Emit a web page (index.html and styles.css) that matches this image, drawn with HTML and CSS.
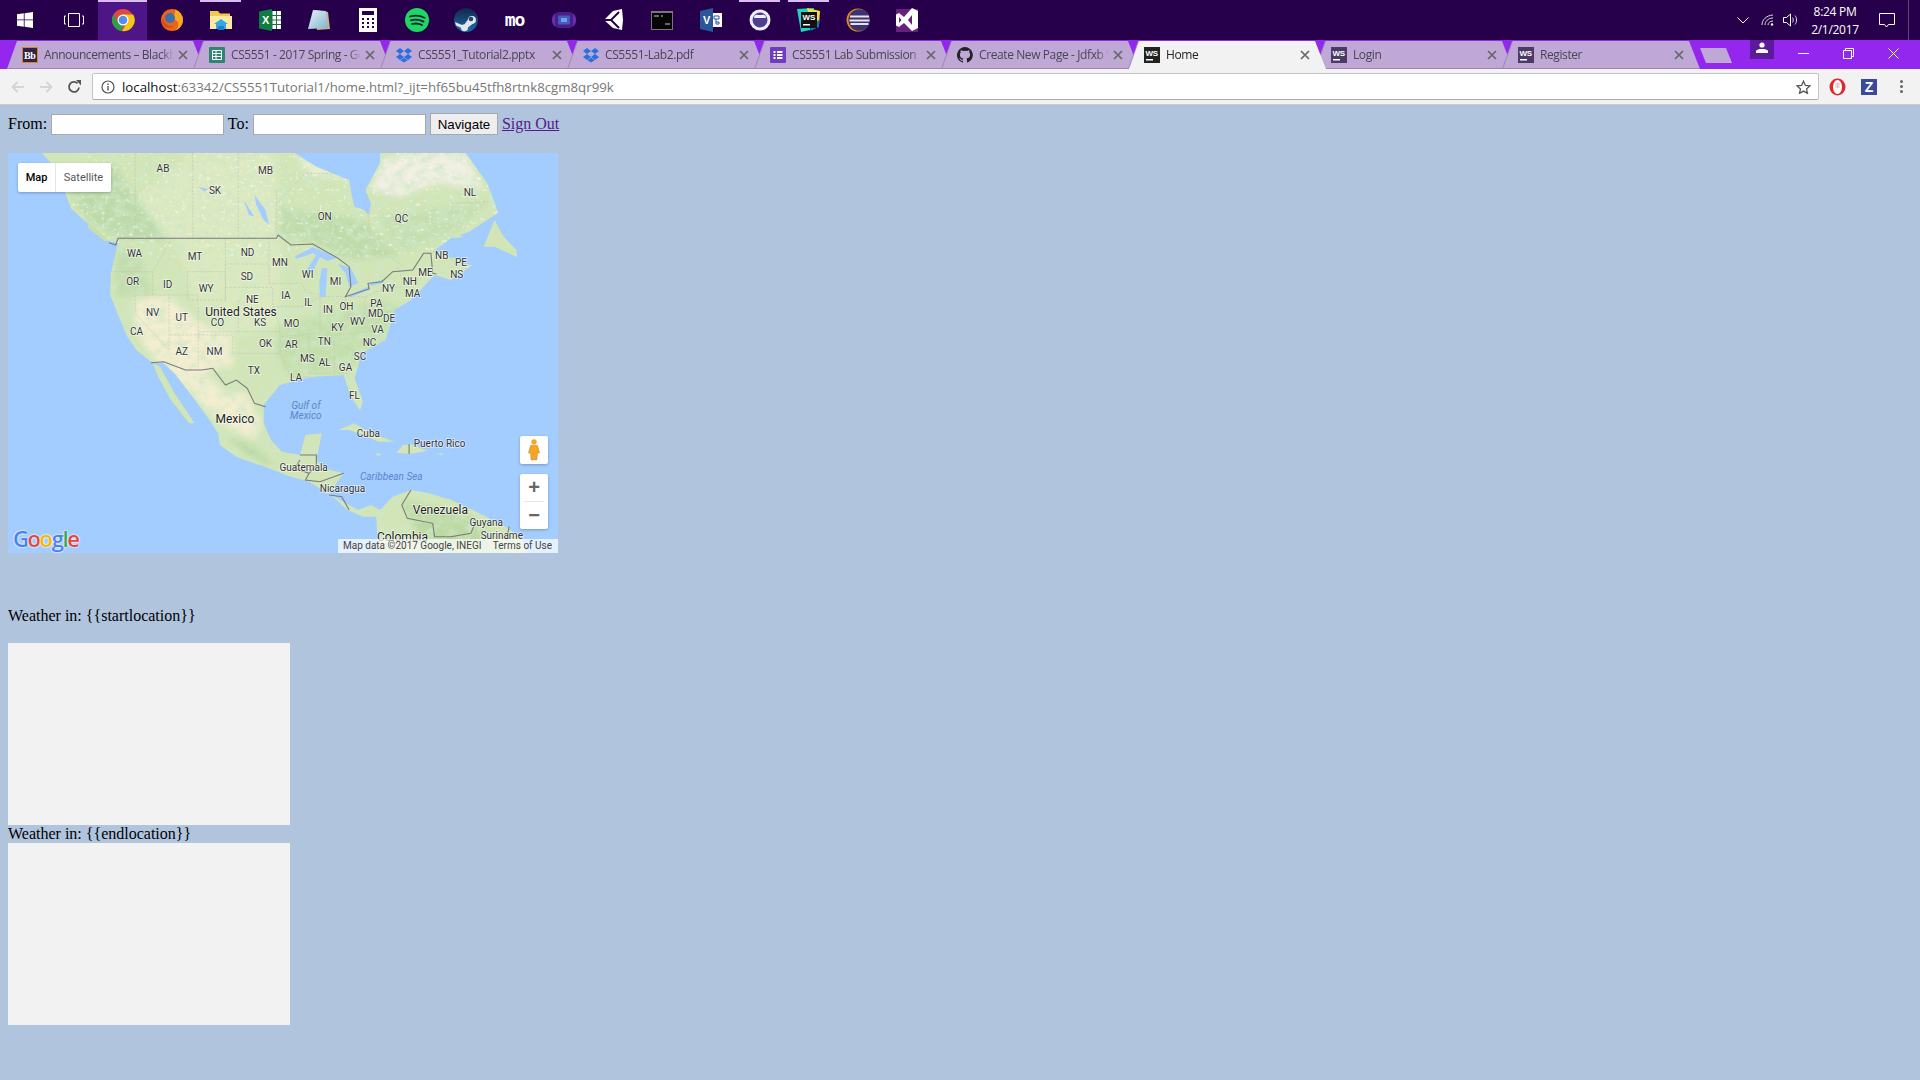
FILE: index.html
```html
<!DOCTYPE html>
<html lang="en">
<head>
<meta charset="utf-8">
<title>Home</title>
<link rel="stylesheet" href="styles.css">
</head>
<body>
<svg class="defs" width="0" height="0" aria-hidden="true">
  <symbol id="ws" viewBox="0 0 16 16"><rect class="ws-box" width="16" height="16" fill="currentColor"/><text x="1.500" y="9" font-family="Liberation Sans" font-weight="700" font-size="8" fill="#fff">WS</text><rect x="2" y="12" width="7" height="1.500" fill="#fff"/></symbol>
  <symbol id="drop" viewBox="0 0 16 16"><path fill="#2a6fe0" d="M4 1 8 4 4 7 0 4ZM12 1l4 3-4 3-4-3ZM4 7l4 3-4 3-4-3ZM12 7l4 3-4 3-4-3ZM8 10.800l3.600 2.400L8 15.600l-3.600-2.400Z"/></symbol>
  <symbol id="x" viewBox="0 0 10 10"><path d="M1 1l8 8M9 1 1 9" stroke="#666" stroke-width="1.700" fill="none"/></symbol>
</svg>

<header class="taskbar">
  <div class="tile"><svg width="16" height="16" viewBox="0 0 16 16"><path fill="#fff" d="M0 2.300 6.800 1.300V7.500H0ZM7.600 1.200 16 0V7.500H7.600ZM0 8.300H6.800V14.700L0 13.700ZM7.600 8.300H16V16L7.600 14.800Z"/></svg></div>
  <div class="tile"><svg width="20" height="14" viewBox="0 0 20 14"><path fill="none" stroke="#fff" stroke-width="1" d="M4.500.5h11v13h-11ZM2 3H.5v8H2M18 3h1.500v8H18"/></svg></div>
  <div class="tile tile-active"><svg width="24" height="24" viewBox="0 0 24 24"><circle cx="12" cy="12" r="11" fill="#dd4b3e"/><path fill="#f5c518" d="M12 6.500h10.200A11 11 0 0 1 11 23l5.500-9Z"/><path fill="#2f9e48" d="M2.500 6.500 8 15l4 2.500L11 23A11 11 0 0 1 2.500 6.500Z"/><circle cx="12" cy="12" r="5.500" fill="#fff"/><circle cx="12" cy="12" r="4.300" fill="#5a8cf0"/></svg></div>
  <div class="tile"><svg width="24" height="24" viewBox="0 0 24 24"><circle cx="12" cy="12" r="11" fill="#e8641b"/><path fill="#f7a823" d="M15 1.500A11 11 0 0 1 23 12c0 4-3 9-8 10.500 3-2 4-5 3-8-1-3-5-3-6-5 1-2 4-3 3-8Z"/><circle cx="10" cy="10" r="5" fill="#3c6fae"/><path fill="#d9481a" d="M3 10c1 6 6 9 11 8-4 4-11 1-12-4Z"/></svg></div>
  <div class="tile"><svg width="24" height="24" viewBox="0 0 24 24"><path fill="#f2c94c" d="M1 3h8l2 2.500h10V21H1Z"/><path fill="#fdeaa0" d="M1 8h22v13H1Z"/><path fill="#35a6e8" d="M7 21v-5h-2l7-5 7 5h-2v5Z"/><rect x="9" y="18" width="6" height="4" fill="#1f7fc4"/></svg></div>
  <div class="tile"><svg width="24" height="24" viewBox="0 0 24 24"><rect x="10" y="3" width="13" height="18" fill="#fff"/><path stroke="#1c7145" stroke-width="1" d="M14 3v18M18.500 3v18M10 7.500h13M10 12h13M10 16.500h13"/><path fill="#107c41" d="M1 3.500 14 1v22L1 20.500Z"/><text x="4" y="16" font-family="Liberation Sans" font-weight="700" font-size="11" fill="#fff">X</text></svg></div>
  <div class="tile"><svg width="24" height="24" viewBox="0 0 24 24"><defs><linearGradient id="pad" x1="0" x2="1" y1="0" y2="1"><stop offset="0" stop-color="#e8f3f8"/><stop offset="1" stop-color="#7fb4cf"/></linearGradient></defs><path fill="#c4b485" d="M8 2 21 4 23 21 10 22Z"/><path fill="url(#pad)" d="M6 2 19 3 21 20 1 21Z"/></svg></div>
  <div class="tile"><svg width="18" height="24" viewBox="0 0 18 24"><rect width="18" height="24" fill="#fff"/><rect x="3" y="3" width="12" height="4" fill="#26004a"/><path fill="#26004a" d="M3 10h2v2H3ZM8 10h2v2H8ZM13 10h2v2h-2ZM3 14h2v2H3ZM8 14h2v2H8ZM13 14h2v2h-2ZM3 18h2v2H3ZM8 18h2v2H8ZM13 18h2v2h-2Z"/></svg></div>
  <div class="tile"><svg width="24" height="24" viewBox="0 0 24 24"><circle cx="12" cy="12" r="12" fill="#1ed760"/><path d="M5 8.500c5-1.500 10-1 14.500 1.300M6 12.300c4.500-1.200 8.500-.8 12.500 1.300M7 16c3.500-.9 7-.6 10 1" stroke="#15243a" stroke-width="1.800" fill="none" stroke-linecap="round"/></svg></div>
  <div class="tile"><svg width="24" height="24" viewBox="0 0 24 24"><defs><linearGradient id="steam" x1="0" x2="0" y1="0" y2="1"><stop offset="0" stop-color="#14234a"/><stop offset="1" stop-color="#1a70a8"/></linearGradient></defs><circle cx="12" cy="12" r="12" fill="url(#steam)"/><path fill="#e6e6ee" d="M1 14 8 17a3.500 3.500 0 0 1 2.500-.8l3.500-4.700a4 4 0 1 1 4.500 4.500l-4.500 3.500a3.500 3.500 0 0 1-7 .3L2 17.500Z"/><circle cx="17" cy="11" r="2.300" fill="#27456f"/></svg></div>
  <div class="tile"><span class="mo-mark">mo</span></div>
  <div class="tile"><svg width="24" height="16" viewBox="0 0 24 16"><rect y="1" width="24" height="14" rx="6" fill="#6a2fb0"/><rect x="3" width="18" height="16" rx="4" fill="#4a1d88"/><rect x="6" y="3.500" width="12" height="9" rx="1" fill="#3f5fc0"/><rect x="9" y="6" width="6" height="4" fill="#7f9be8"/></svg></div>
  <div class="tile"><svg width="22" height="24" viewBox="0 0 22 24"><path fill="#fff" d="M2 12 11 3 20 1 21 12 20 22 11 20Z"/><path stroke="#26004a" stroke-width="2" fill="none" d="M2 12H9L17 4M9 12 17 20"/></svg></div>
  <div class="tile"><svg width="22" height="19" viewBox="0 0 22 19"><rect width="22" height="19" fill="#777"/><rect x="1" y="2" width="20" height="16" fill="#050505"/><path stroke="#ccc" stroke-width="1" d="M3 5h5M10 5h2M14 13h5"/></svg></div>
  <div class="tile"><svg width="22" height="24" viewBox="0 0 22 24"><rect x="10" y="5" width="12" height="14" fill="#fff"/><path stroke="#2b579a" stroke-width="1" fill="none" d="M14 8h5v3h-5ZM16 11v3h3v2h-3v-2"/><path fill="#2b579a" d="M0 3 13 0v24L0 21Z"/><text x="3" y="16" font-family="Liberation Sans" font-weight="700" font-size="11" fill="#fff">V</text></svg></div>
  <div class="tile"><svg width="22" height="22" viewBox="0 0 22 22"><circle cx="11" cy="11" r="9" fill="#4f3f8f" stroke="#f1edf8" stroke-width="3"/><path fill="#f1edf8" d="M5 9C5 5 8 5.500 9 6h4c1-.5 4-1 4 3Z"/></svg></div>
  <div class="tile"><svg width="24" height="24" viewBox="0 0 24 24"><path fill="#22d3c0" d="M0 1 17 0l-4 22-9 2Z"/><path fill="#f4e23c" d="M10 0l13 3-1 14-8-1Z"/><path fill="#0a7cc4" d="M22 12v7l-9 4 3-8Z"/><rect x="4" y="4" width="16" height="16" fill="#111"/><text x="5.500" y="12" font-family="Liberation Sans" font-weight="700" font-size="8" fill="#fff">WS</text><rect x="6" y="16" width="7" height="1.500" fill="#fff"/></svg></div>
  <div class="tile"><svg width="24" height="24" viewBox="0 0 24 24"><circle cx="12" cy="12" r="11.500" fill="#e08a1e"/><circle cx="13.200" cy="12" r="10.800" fill="#3d3270"/><path stroke="#e6e2f4" stroke-width="2" d="M4 8.500h19M3.500 12.500h20M4.500 16h18"/></svg></div>
  <div class="tile"><svg width="22" height="24" viewBox="0 0 22 24"><rect y="1" width="22" height="23" fill="#68217a"/><path fill="#fff" d="M16 0 22 3v17l-6 3-8-8-5 4-3-1.500v-11L3 5l5 4Zm0 7-4 5 4 5ZM3 9v6l2.500-3Z"/></svg></div>
  <div class="tray">
    <svg class="tray-chevron" width="12" height="7" viewBox="0 0 12 7"><path d="M.5.5 6 6l5.500-5.500" fill="none" stroke="#fff"/></svg>
    <svg class="tray-wifi" width="13" height="12" viewBox="0 0 13 12"><path d="M1 11C1 6 5 1.500 12 1M4 11c0-3.500 3-7 8-7M7 11c0-2 2-4 5-4" fill="none" stroke="#ddd" stroke-width="1"/><circle cx="11" cy="10.500" r="1.200" fill="#fff"/></svg>
    <svg class="tray-sound" width="16" height="14" viewBox="0 0 16 14"><path d="M.5 4.500h3l4-3.500v12l-4-3.500h-3Z" fill="none" stroke="#fff"/><path d="M9.500 4.500c1 1.500 1 3.500 0 5M12 2.500c2 2.500 2 6.500 0 9" fill="none" stroke="#ddd"/></svg>
    <div class="clock"><span>8:24 PM</span><span>2/1/2017</span></div>
    <svg class="tray-note" width="16" height="15" viewBox="0 0 16 15"><path d="M.5.500h15v11H9.500L7.500 14l-2-2.500h-5Z" fill="none" stroke="#fff"/></svg>
    <span class="tray-edge"></span>
  </div>
</header>

<nav class="tabstrip">
  <div class="tab"><div class="tab-body"><svg class="favicon" viewBox="0 0 16 16"><rect width="16" height="16" fill="#d9822b"/><rect x="1" y="1" width="14" height="14" fill="#2e2548"/><text x="2" y="12" font-family="Liberation Serif" font-weight="700" font-size="10" fill="#fff">Bb</text></svg><span class="tab-title">Announcements – Blackboard</span><svg class="tab-x"><use href="#x"/></svg></div></div>
  <div class="tab"><div class="tab-body"><svg class="favicon" viewBox="0 0 16 16"><rect width="16" height="16" rx="1" fill="#2e8571"/><path fill="none" stroke="#fff" stroke-width="1" d="M3.500 3.500h9v9h-9ZM3.500 6.500h9M3.500 9.500h9M7 3.500v9"/></svg><span class="tab-title">CS5551 - 2017 Spring - Google Sheets</span><svg class="tab-x"><use href="#x"/></svg></div></div>
  <div class="tab"><div class="tab-body"><svg class="favicon"><use href="#drop"/></svg><span class="tab-title">CS5551_Tutorial2.pptx</span><svg class="tab-x"><use href="#x"/></svg></div></div>
  <div class="tab"><div class="tab-body"><svg class="favicon"><use href="#drop"/></svg><span class="tab-title">CS5551-Lab2.pdf</span><svg class="tab-x"><use href="#x"/></svg></div></div>
  <div class="tab"><div class="tab-body"><svg class="favicon" viewBox="0 0 16 16"><rect width="16" height="16" rx="1" fill="#6f3cc0"/><path fill="#fff" d="M3.500 4h2v2h-2ZM7 4h5.500v2H7ZM3.500 7h2v2h-2ZM7 7h5.500v2H7ZM3.500 10h2v2h-2ZM7 10h5.500v2H7Z"/></svg><span class="tab-title">CS5551 Lab Submission</span><svg class="tab-x"><use href="#x"/></svg></div></div>
  <div class="tab"><div class="tab-body"><svg class="favicon" viewBox="0 0 16 16"><path fill="#222" d="M8 0a8 8 0 0 0-2.500 15.600c.4.100.5-.2.500-.4v-1.400c-2.200.5-2.700-1-2.700-1-.4-.9-.9-1.200-.9-1.200-.7-.5.100-.5.100-.5.800.1 1.200.8 1.200.8.700 1.200 1.900.9 2.300.7.100-.5.300-.9.500-1.100-1.800-.2-3.600-.9-3.600-4 0-.9.300-1.600.8-2.100-.1-.2-.4-1 .1-2.100 0 0 .7-.2 2.200.8a7.600 7.600 0 0 1 4 0c1.500-1 2.200-.8 2.200-.8.400 1.100.2 1.900.1 2.100.5.600.8 1.300.8 2.100 0 3.100-1.900 3.700-3.700 3.900.3.300.6.800.6 1.500v2.200c0 .2.100.5.600.4A8 8 0 0 0 8 0Z"/></svg><span class="tab-title">Create New Page - Jdfxb Wiki</span><svg class="tab-x"><use href="#x"/></svg></div></div>
  <div class="tab tab-active"><div class="tab-body"><svg class="favicon ws-dark"><use href="#ws"/></svg><span class="tab-title">Home</span><svg class="tab-x"><use href="#x"/></svg></div></div>
  <div class="tab"><div class="tab-body"><svg class="favicon ws-muted"><use href="#ws"/></svg><span class="tab-title">Login</span><svg class="tab-x"><use href="#x"/></svg></div></div>
  <div class="tab"><div class="tab-body"><svg class="favicon ws-muted"><use href="#ws"/></svg><span class="tab-title">Register</span><svg class="tab-x"><use href="#x"/></svg></div></div>
  <div class="newtab"></div>
  <div class="profile"><svg width="12" height="11" viewBox="0 0 12 11"><circle cx="6" cy="3" r="2.600" fill="#fff"/><path fill="#fff" d="M0 11V8.500L3.500 7h5L12 8.500V11Z"/></svg></div>
  <div class="winctl"><svg width="11" height="11" viewBox="0 0 11 11"><path d="M0 5.500h11" stroke="#fff"/></svg></div>
  <div class="winctl"><svg width="11" height="11" viewBox="0 0 11 11"><path d="M.5 2.500h8v8h-8ZM2.500 2.500v-2h8v8h-2" fill="none" stroke="#fff"/></svg></div>
  <div class="winctl"><svg width="11" height="11" viewBox="0 0 11 11"><path d="M.5.500l10 10M10.500.500l-10 10" stroke="#fff"/></svg></div>
</nav>

<div class="toolbar">
  <div class="tool"><svg width="14" height="12" viewBox="0 0 14 12"><path d="M13 6H1.500M6.500 1l-5 5 5 5" fill="none" stroke="#d4d4d4" stroke-width="1.800"/></svg></div>
  <div class="tool"><svg width="14" height="12" viewBox="0 0 14 12"><path d="M1 6h11.500M7.500 1l5 5-5 5" fill="none" stroke="#d4d4d4" stroke-width="1.800"/></svg></div>
  <div class="tool"><svg width="14" height="14" viewBox="0 0 14 14"><path d="M12 7.500A5 5 0 1 1 10.500 3.300" fill="none" stroke="#555" stroke-width="1.800"/><path fill="#555" d="M9 0h5v5.500Z"/></svg></div>
  <div class="omnibox">
    <svg class="info" width="14" height="14" viewBox="0 0 14 14"><circle cx="7" cy="7" r="6" fill="none" stroke="#555" stroke-width="1.200"/><path d="M6.300 6h1.400v4.500H6.300ZM6.300 3.500h1.400v1.400H6.300Z" fill="#555"/></svg>
    <span class="url"><span class="url-host">localhost</span>:63342/CS5551Tutorial1/home.html?_ijt=hf65bu45tfh8rtnk8cgm8qr99k</span>
    <svg class="star" width="15" height="14" viewBox="0 0 15 14"><path d="M7.500 1.200 9.400 5.400l4.500.5-3.400 3 1 4.500-4-2.300-4 2.300 1-4.500-3.400-3 4.500-.5Z" fill="none" stroke="#555" stroke-width="1.300"/></svg>
  </div>
  <div class="ext ext-opera"><svg width="17" height="18" viewBox="0 0 17 18"><ellipse cx="8.500" cy="9" rx="8" ry="8.500" fill="#e0272b"/><ellipse cx="8.500" cy="9" rx="4.500" ry="7" fill="#fff"/><path stroke="#e0a8a8" stroke-width=".8" d="M7 5v5M8.500 4.500V10M10 5v5"/></svg></div>
  <div class="ext"><span class="zmark">Z</span></div>
  <div class="ext ext-menu"><span></span><span></span><span></span></div>
</div>

<main class="page">
  <form class="route">
    <label class="route-label">From:</label>
    <input class="route-input" type="text">
    <label class="route-label">To:</label>
    <input class="route-input" type="text">
    <button class="route-btn" type="button">Navigate</button>
    <a class="signout" href="#">Sign Out</a>
  </form>

  <div class="map">
    <svg class="map-canvas" width="550" height="400" viewBox="0 0 550 400">
      <defs>
        <filter id="soft" x="-5%" y="-5%" width="110%" height="110%"><feGaussianBlur stdDeviation="9"/></filter>
        <filter id="mottle" x="0" y="0" width="100%" height="100%"><feTurbulence type="fractalNoise" baseFrequency=".035 .04" numOctaves="3" seed="7"/><feColorMatrix values="0 0 0 0 .62  0 0 0 0 .80  0 0 0 0 .56  1.800 0 0 0 -.72"/></filter>
        <filter id="speck" x="0" y="0" width="100%" height="100%"><feTurbulence type="fractalNoise" baseFrequency=".09" numOctaves="2" seed="3"/><feColorMatrix values="0 0 0 0 .97  0 0 0 0 .97  0 0 0 0 .90  0 3 0 0 -1.850"/></filter>
        <clipPath id="landclip"><path id="landpath" d="M115 39 150 80 170 130 195 205 240 250 290 300 325 310 318 340 305 400 303 465 325 525 350 590 375 630 415 665 450 670 480 700 530 770 570 830 600 880 605 915 650 950 740 985 800 1010 850 1025 910 1065 955 1110 1000 1130 1035 1130 1040 1240 1450 1240 1430 1190 1390 1160 1300 1110 1240 1080 1180 1060 1130 1050 1080 1070 1045 1110 1020 1095 985 1110 950 1090 905 1060 945 1000 890 985 870 960 885 880 840 885 825 945 775 935 745 900 725 850 725 795 770 735 820 720 860 710 945 705 965 770 990 810 998 785 975 715 995 640 1060 600 1085 510 1130 480 1195 405 1240 420 1300 375 1250 370 1225 335 1190 335 1240 295 1290 275 1370 218 1340 130 1280 39 1045 39 1045 70 1005 150 1020 190 1015 225 970 180 960 120 870 80 810 39Z"/></clipPath>
      </defs>
      <rect width="550" height="400" fill="#a3ccff"/>
      <g transform="translate(-8 -13) scale(.36364 .33333)">
        <use href="#landpath" fill="#d2e5b6"/>
        <g clip-path="url(#landclip)">
          <g filter="url(#soft)">
            <path fill="#dde9c1" d="M530 39 760 39 760 290 470 295 350 200Z"/>
            <path fill="#bddaaa" d="M190 150 310 70 460 300 320 295 240 240Z"/>
            <path fill="#bfdbaa" d="M770 200 1000 240 1100 350 950 360 870 310 770 290Z"/>
            <path fill="#c6dfb1" d="M1030 230 1350 180 1240 290 1100 340Z"/>
            <path fill="#f0efe2" d="M1050 60 1120 39 1280 39 1330 150 1200 130 1100 170 1020 150Z"/>
            <path fill="#eef0d8" d="M810 39 960 120 850 100Z"/>
            <path fill="#dce9bf" d="M480 300 770 300 770 560 640 590 540 500Z"/>
            <path fill="#f3eed0" d="M370 470 470 470 540 540 640 590 640 680 560 690 620 760 680 760 720 850 700 900 620 860 520 760 450 680 410 640 370 560Z"/>
            <path fill="#c4dfac" d="M760 560 1060 480 1100 500 1060 600 990 640 960 700 800 710 760 660Z"/>
            <path fill="#c2ddad" d="M310 320 380 330 420 470 320 470Z"/>
            <path fill="#bcd9a4" d="M1100 1080 1300 1130 1400 1240 1180 1240Z"/>
            <path fill="#bcd9a8" d="M610 880 700 960 760 980 700 920Z"/>
          </g>
          <rect x="0" y="0" width="1568" height="1290" filter="url(#mottle)"/>
          <path filter="url(#speck)" d="M200 39H1370V350H1000L760 280H400Z"/>
        </g>
        <path fill="#d2e5b6" d="M420 670 440 680 480 760 535 850 520 850 470 780 435 710Z"/>
        <path fill="#c6deb0" d="M245 250 300 300 290 305 240 262Z"/>
        <path fill="#d2e5b6" d="M1330 320 1360 240 1385 290 1420 330 1422 352 1400 340 1360 320Z"/>
        <path fill="#d2e5b6" d="M930 870 975 850 1020 880 1085 905 1040 905 1000 885 960 870Z"/>
        <path fill="#d2e5b6" d="M1108 915 1130 912 1175 932 1130 942 1090 938Z"/>
        <path fill="#d2e5b6" d="M1030 940 1052 942 1040 948ZM1200 940 1220 940 1215 945ZM1235 938l6 2-4 2ZM1260 942l6 2-5 1Z"/>
        <path fill="#d2e5b6" d="M1240 350 1285 370 1250 372ZM1250 295 1275 290 1250 280Z"/>
        <path fill="#a3ccff" d="M810 350 860 322 930 352 900 362 860 340 815 356ZM885 385 900 385 895 470 880 470 878 430ZM930 372 965 385 985 430 960 440 950 400ZM955 468 1012 440 1020 446 965 472ZM1015 430 1050 420 1055 428 1020 438Z"/>
        <path fill="#a3ccff" d="M700 165 730 210 740 255 725 240 705 195ZM670 180 700 230 685 225ZM545 140l30 8-14 6ZM970 180l30 30-25-10Z"/>
        <path fill="#a3ccff" d="M840 395 870 345 880 350 860 395Z"/>
        <g fill="none" stroke="#c0c0b4" stroke-width="1.500" stroke-dasharray="7 4">
          <path d="M530 39V295M655 39V295M760 150V285M372 39V290M760 190 840 100 930 100"/>
          <path d="M1005 150 1020 310 1110 380M1240 190 1345 185"/>
          <path d="M620 295V480M740 295V430H830L840 455 880 465V470M620 372H740M620 442H750V500L770 560V640H640V585H465M515 395H620V480H515ZM372 465H515M372 465V520L465 630V465M515 465H545V680M420 465V395L470 300M305 395 420 395M545 575H770M655 480V575M750 500H835L880 470V580M880 580 770 590M880 470H950L960 530 890 590 1050 570M950 470 1005 470 1060 445 1110 440M1005 470 1000 530 1090 510M850 590V700H960M920 590V700M770 640 800 710H850M950 620 1000 660M1095 380 1120 470"/>
        </g>
        <g fill="none" stroke="#7a7a7a" stroke-width="3">
          <path d="M300 308 318 315 325 295H760L765 285 800 315 860 312 930 355 960 380 965 440 950 470 1015 447 1012 430 1050 425 1080 395 1135 390 1165 340 1185 340 1190 400 1200 402"/>
          <path d="M415 668 450 665 510 690 555 690 585 685 620 735 650 720 680 745 700 790 730 800"/>
          <path d="M825 945H870V975L850 1000 810 985 825 960M850 1000 840 1020 880 1025 945 1000M905 1065 940 1070 960 1110M1130 1050 1105 1095 1120 1135 1190 1150 1195 1190 1240 1190 1295 1180 1310 1140M1400 1160 1395 1190M1125 912V942"/>
        </g>
      </g>
      <g class="lbl">
        <text x="155" y="18.500">AB</text><text x="257.500" y="21.200">MB</text><text x="207" y="40.500">SK</text><text x="316.700" y="66.500">ON</text><text x="393.500" y="68.500">QC</text><text x="462" y="43.200">NL</text>
        <text x="126.500" y="103.500">WA</text><text x="187" y="106.500">MT</text><text x="239.600" y="102.500">ND</text><text x="272" y="112.500">MN</text><text x="299.600" y="124.500">WI</text><text x="327.600" y="131.500">MI</text>
        <text x="433.800" y="106.200">NB</text><text x="453" y="112.500">PE</text><text x="448.700" y="124.500">NS</text><text x="417.500" y="122.500">ME</text><text x="401.800" y="131.500">NH</text><text x="380.400" y="138.500">NY</text><text x="404.700" y="143.500">MA</text>
        <text x="124.700" y="131.500">OR</text><text x="159.600" y="134.500">ID</text><text x="198.200" y="138.500">WY</text><text x="238.900" y="126.500">SD</text><text x="277.800" y="145.500">IA</text><text x="244.400" y="149.500">NE</text><text x="300.400" y="153.200">IL</text><text x="338.500" y="156.500">OH</text><text x="320" y="159.500">IN</text><text x="368.400" y="154.200">PA</text><text x="367.600" y="163.500">MD</text><text x="381" y="168.500">DE</text>
        <text x="144.700" y="162.500">NV</text><text x="173.800" y="167.500">UT</text><text x="209.500" y="172.500">CO</text><text x="252" y="172.500">KS</text><text x="283.600" y="173.500">MO</text><text x="329.500" y="177.500">KY</text><text x="349.500" y="172.200">WV</text><text x="369.500" y="179.500">VA</text><text x="128.400" y="181.500">CA</text>
        <text x="257.500" y="193.500">OK</text><text x="283.300" y="194.500">AR</text><text x="316.400" y="191.500">TN</text><text x="361.500" y="192.500">NC</text><text x="173.800" y="201.500">AZ</text><text x="206.500" y="201.500">NM</text><text x="299.300" y="208.500">MS</text><text x="316.700" y="212.500">AL</text><text x="352" y="206.500">SC</text><text x="337.500" y="217.500">GA</text><text x="245.800" y="220.500">TX</text><text x="288" y="227.500">LA</text><text x="346.500" y="245.500">FL</text>
        <text x="360.400" y="283.500">Cuba</text><text x="431.600" y="293.500">Puerto Rico</text><text x="295.600" y="317.500">Guatemala</text><text x="334.500" y="338.500">Nicaragua</text><text x="478.200" y="372.500">Guyana</text><text x="493.800" y="386">Suriname</text>
      </g>
      <g class="lbl lbl-big">
        <text x="233" y="163">United States</text><text x="226.900" y="270">Mexico</text><text x="432.400" y="361">Venezuela</text><text x="394.500" y="388">Colombia</text>
      </g>
      <g class="lbl lbl-sea">
        <text x="298" y="255.500">Gulf of</text><text x="297.800" y="265.500">Mexico</text><text x="383.300" y="326.500">Caribbean Sea</text>
      </g>
    </svg>
    <div class="maptype"><span class="maptype-on">Map</span><span class="maptype-off">Satellite</span></div>
    <div class="pegman"><svg width="12" height="22" viewBox="0 0 12 22"><circle cx="6" cy="3" r="2.700" fill="#f5a623"/><path fill="#f5a623" stroke="#c97f10" stroke-width=".5" d="M2.500 6.500h7L11.500 14H9.500L8.800 21H6.500V15H5.500V21H3.200L2.500 14H.5Z"/></svg></div>
    <div class="zoomctl"><span class="zoombtn">+</span><span class="zoomrule"></span><span class="zoombtn">−</span></div>
    <div class="glogo"><span class="g-b">G</span><span class="g-r">o</span><span class="g-y">o</span><span class="g-b">g</span><span class="g-g">l</span><span class="g-r">e</span></div>
    <div class="mapcredit"><span>Map data ©2017 Google, INEGI</span><span>Terms of Use</span></div>
  </div>

  <p class="weather-first">Weather in: {{startlocation}}</p>
  <div class="weather-box"></div>
  <div class="weather-line">Weather in: {{endlocation}}</div>
  <div class="weather-box"></div>
</main>
</body>
</html>
```

FILE: styles.css
```css
html, body { margin: 0; height: 100%; }
body {
  height: 1080px;
  overflow: hidden;
  background: #b0c4de;
  color: #000;
  font-family: "Liberation Serif", "Times New Roman", serif;
  font-size: 16px;
}
.defs { position: absolute; }

/* Windows taskbar */
.taskbar {
  display: flex;
  height: 40px;
  background: #26004a;
}
.tile {
  flex: 0 0 49px;
  display: flex;
  align-items: center;
  justify-content: center;
  box-sizing: border-box;
}
.tile-active { background: #4e1587; box-shadow: inset 0 2px 0 #d9bdf2; }
.tile:nth-child(5) { box-shadow: inset 4px 0 0 #26004a, inset -4px 0 0 #26004a, inset 0 2px 0 #d9bdf2; }
.tile:nth-child(16), .tile:nth-child(17) { box-shadow: inset 4px 0 0 #26004a, inset -4px 0 0 #26004a, inset 0 2px 0 #d9bdf2; }
.mo-mark {
  color: #fff;
  font: 700 18px/1 "DejaVu Sans Mono", monospace;
  letter-spacing: -1px;
}
.tray { margin-left: auto; display: flex; align-items: center; width: 189px; }
.tray-chevron { margin-left: 6px; }
.tray-wifi { margin-left: 12px; }
.tray-sound { margin-left: 9px; }
.clock {
  display: flex;
  flex-direction: column;
  align-items: center;
  width: 66px;
  margin-left: 3px;
  gap: 3px;
  color: #fff;
  font: 12px/15px "Open Sans", sans-serif;
  letter-spacing: -.3px;
}
.tray-note { margin-left: 11px; }
.tray-edge { width: 1px; height: 40px; margin-left: 13px; background: #5d4a76; }

/* Chrome tab strip */
.tabstrip {
  display: flex;
  height: 29px;
  background: #9327ee;
}
.tab {
  flex: 0 0 197px;
  width: 197px;
  min-width: 0;
  margin-right: -10px;
  height: 29px;
  filter: drop-shadow(-1px 0 0 #9d86b8);
}
.tab:first-child { margin-left: 7px; filter: none; }
.tab-body {
  display: flex;
  align-items: center;
  box-sizing: border-box;
  width: 197px;
  height: 28px;
  margin-top: 1px;
  padding: 0 16px 0 15px;
  background: #c0a8d6;
  border-bottom: 1px solid #9a83b6;
  clip-path: polygon(10px 0, 186px 0, 197px 100%, 0 100%);
  color: #4a4458;
  font: 12px/16px "Open Sans", sans-serif;
  letter-spacing: -.4px;
}
.tab-active { position: relative; z-index: 1; }
.tab-active .tab-body { background: #f2f2f2; color: #222; border-bottom-color: #f2f2f2; }
.favicon { flex: 0 0 16px; width: 16px; height: 16px; margin-right: 6px; }
.ws-dark { color: #222; }
.ws-muted { color: #4b3a63; }
.tab-title {
  flex: 1;
  min-width: 0;
  overflow: hidden;
  white-space: nowrap;
  -webkit-mask-image: linear-gradient(to right, #000 calc(100% - 12px), transparent 100%);
  mask-image: linear-gradient(to right, #000 calc(100% - 12px), transparent 100%);
}
.tab-x { flex: 0 0 10px; width: 10px; height: 10px; margin-left: 4px; }
.newtab {
  flex: 0 0 32px;
  height: 15px;
  margin: 8px 0 0 10px;
  background: #c0a8d6;
  clip-path: polygon(0 0, 26px 0, 32px 100%, 6px 100%);
}
.profile {
  flex: 0 0 24px;
  height: 19px;
  margin-left: 18px;
  display: flex;
  justify-content: center;
  padding-top: 2px;
  box-sizing: border-box;
  background: #5d1a9b;
}
.profile + .winctl { margin-left: 7px; }
.winctl {
  flex: 0 0 45px;
  height: 26px;
  display: flex;
  align-items: center;
  justify-content: center;
}

/* Toolbar */
.toolbar {
  display: flex;
  align-items: center;
  box-sizing: border-box;
  height: 36px;
  padding: 0 3px 0 4px;
  background: #f2f2f2;
  border-bottom: 1px solid #c8ccd2;
}
.tool { flex: 0 0 28px; display: flex; justify-content: center; }
.omnibox {
  flex: 1;
  display: flex;
  align-items: center;
  box-sizing: border-box;
  height: 27px;
  margin-left: 4px;
  padding: 0 7px 0 8px;
  background: #fff;
  border: 1px solid #c4c4c4;
  border-bottom-color: #aaa;
  border-radius: 2px;
}
.info { flex: none; margin-right: 7px; }
.url {
  flex: 1;
  color: #777;
  font: 13.25px/16px "Open Sans", sans-serif;
  white-space: nowrap;
}
.url-host { color: #111; }
.star { flex: none; }
.ext { flex: 0 0 32px; display: flex; justify-content: center; align-items: center; }
.ext-opera { margin-left: 2px; }
.zmark {
  width: 16px;
  height: 16px;
  background: #3b4a96;
  color: #fff;
  text-align: center;
  font: 700 14px/16px "Liberation Sans", sans-serif;
}
.ext-menu { flex-direction: column; gap: 2px; }
.ext-menu span { width: 3px; height: 3px; border-radius: 50%; background: #666; }

/* Page */
.page { padding: 8px; }
.route { display: block; height: 40px; }
.route-input {
  box-sizing: border-box;
  width: 173px;
  height: 21px;
  padding: 1px 2px;
  background: #fff;
  border: 1px solid #a9a9a9;
  vertical-align: baseline;
}
.route-btn {
  box-sizing: border-box;
  width: 68px;
  height: 22px;
  padding: 0;
  background: #eee;
  border: 1px solid #a9a9a9;
  color: #000;
  font: 13.333px "Liberation Sans", Arial, sans-serif;
}
.signout { color: #551a8b; }

.map { position: relative; width: 550px; height: 400px; }
.map-canvas { display: block; }
.lbl {
  font: 10px "Roboto", sans-serif;
  fill: #333;
  text-anchor: middle;
  paint-order: stroke;
  stroke: rgba(255, 255, 255, .65);
  stroke-width: 1.500px;
}
.lbl-big { font-size: 12px; fill: #222; }
.lbl-sea { font-style: italic; fill: #5a86cc; stroke: none; }
.maptype {
  position: absolute;
  top: 10px;
  left: 10px;
  display: flex;
  height: 29px;
  background: #fff;
  border-radius: 2px;
  box-shadow: 0 1px 3px rgba(0, 0, 0, .25);
  font: 11px/29px "Roboto", sans-serif;
}
.maptype-on { width: 37px; text-align: center; color: #000; font-weight: 500; border-right: 1px solid #e6e6e6; }
.maptype-off { width: 55px; text-align: center; color: #565656; }
.pegman {
  position: absolute;
  left: 512px;
  top: 283px;
  width: 28px;
  height: 28px;
  display: flex;
  align-items: center;
  justify-content: center;
  background: #fff;
  border-radius: 2px;
  box-shadow: 0 1px 3px rgba(0, 0, 0, .25);
}
.zoomctl {
  position: absolute;
  left: 512px;
  top: 321px;
  width: 28px;
  height: 55px;
  display: flex;
  flex-direction: column;
  align-items: center;
  background: #fff;
  border-radius: 2px;
  box-shadow: 0 1px 3px rgba(0, 0, 0, .25);
}
.zoombtn {
  flex: 1;
  color: #666;
  font: 700 20px/27px "Liberation Sans", sans-serif;
}
.zoomrule { width: 20px; height: 1px; background: #e6e6e6; }
.glogo {
  position: absolute;
  left: 5px;
  top: 372px;
  font: 600 22px/26px "Open Sans", sans-serif;
  letter-spacing: -1.400px;
  text-shadow: 0 0 2px #fff, 0 0 2px #fff;
}
.g-b { color: #4a82ee; }
.g-r { color: #e8453c; }
.g-y { color: #f5b800; }
.g-g { color: #37a853; }
.mapcredit {
  position: absolute;
  right: 0;
  bottom: 0;
  display: flex;
  gap: 10px;
  box-sizing: border-box;
  width: 220px;
  height: 14px;
  padding: 0 6px 0 5px;
  justify-content: space-between;
  background: rgba(255, 255, 255, .7);
  color: #444;
  font: 10px/14px "Roboto", sans-serif;
  white-space: nowrap;
}
.weather-first { margin: 54px 0 18px; line-height: 18px; }
.weather-line { line-height: 18px; }
.weather-box { width: 282px; height: 182px; background: #f2f2f2; }
```
